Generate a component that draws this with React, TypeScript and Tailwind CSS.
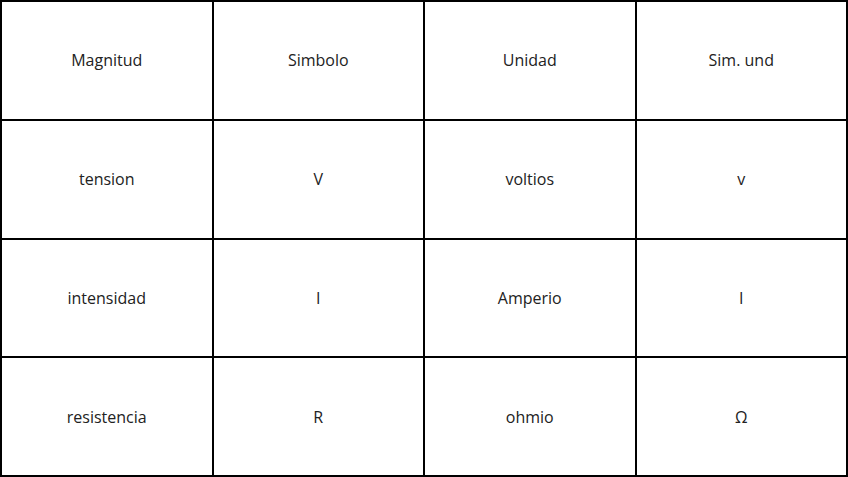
import React from "react";

const rows: string[][] = [
    ["Magnitud", "Simbolo", "Unidad", "Sim. und"],
    ["tension", "V", "voltios", "v"],
    ["intensidad", "I", "Amperio", "I"],
    ["resistencia", "R", "ohmio", "Ω"],
];

export default function App() {
    return (
        <div className="w-[848px] h-[477px] bg-white">
            <div className="grid grid-cols-4 grid-rows-4 gap-[2px] p-[2px] bg-black w-full h-full">
                {rows.flatMap((row, i) =>
                    row.map((cell, j) => (
                        <div
                            key={`${i}-${j}`}
                            className="bg-white flex items-center justify-center text-[16px] text-[#222] font-['Open_Sans',sans-serif]"
                        >
                            {cell}
                        </div>
                    ))
                )}
            </div>
        </div>
    );
}
